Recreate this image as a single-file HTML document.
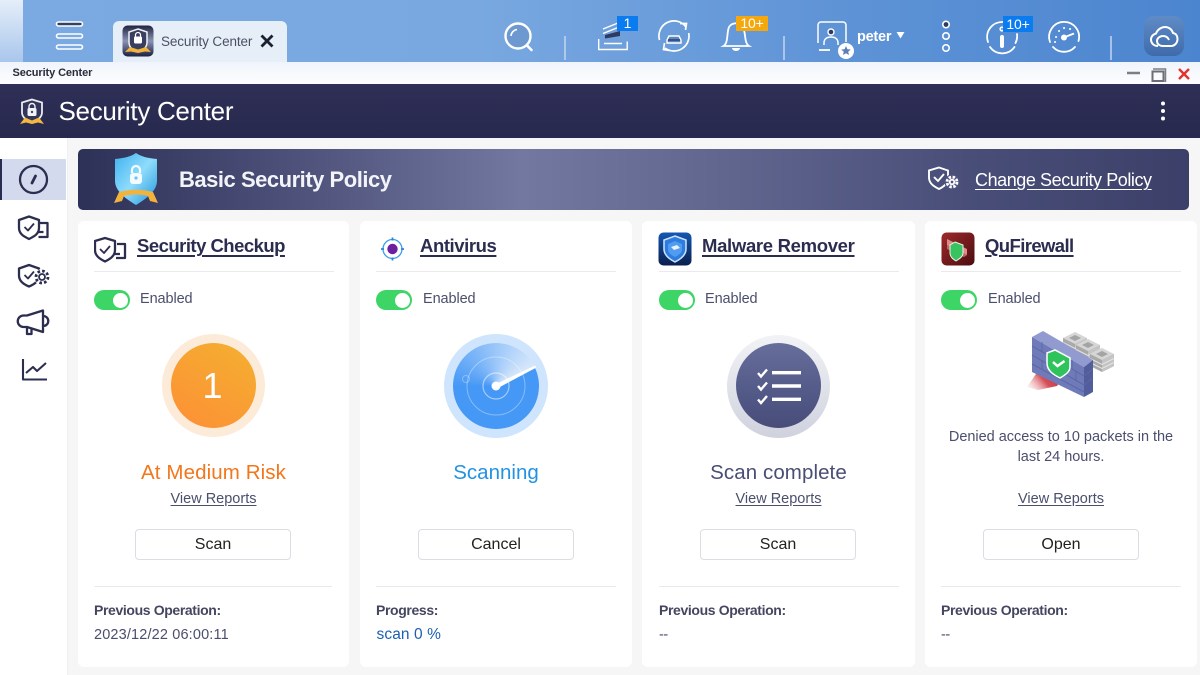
<!DOCTYPE html>
<html><head><meta charset="utf-8"><style>
html,body{margin:0;padding:0}
body{width:1200px;height:675px;overflow:hidden;position:relative;background:#f6f6f7;font-family:"Liberation Sans",sans-serif;color:#44486a}
.a,.t,svg{position:absolute}
.t{white-space:nowrap;line-height:1}
.c{transform:translateX(-50%);text-align:center}
.card{position:absolute;top:221px;height:446px;background:#fff;border-radius:6px}
.ttl{font-size:18.5px;font-weight:bold;color:#2b2d4f;text-decoration:underline;text-decoration-thickness:1.5px;text-underline-offset:3px;top:237px}
.hr{position:absolute;height:1px;background:#e9e9ee}
.tog{position:absolute;top:290px;width:36px;height:20px;border-radius:10px;background:#3dd565}
.tog:after{content:"";position:absolute;right:2.5px;top:2.5px;width:15px;height:15px;background:#fff;border-radius:50%}
.en{font-size:14.5px;top:292px;color:#4b4e6d;letter-spacing:-.1px}
.vr{font-size:14.5px;top:492px;text-decoration:underline;text-underline-offset:2px;color:#4b4e6d}
.btn{position:absolute;top:529px;width:154px;height:29px;border:1px solid #dcdde2;border-radius:4px;background:#fff;color:#222;font-size:16px;text-align:center;line-height:30px}
.po{font-size:14px;font-weight:bold;top:603px;color:#44465f;letter-spacing:-.37px}
.v{font-size:14.5px;top:628px;color:#4b4e6d}
.st{font-size:20.5px;top:463px}
</style></head><body>

<!-- top bar -->
<div class="a" style="left:0;top:0;width:1200px;height:62px;background:linear-gradient(90deg,#7ba9e1 0%,#79a8e0 40%,#5e93d6 70%,#4c85cf 100%)"></div>
<div class="a" style="left:0;top:0;width:23px;height:62px;background:linear-gradient(180deg,#e5eef9,#a9c6ec)"></div>
<svg style="left:0;top:0" width="1200" height="62" fill="none" stroke="#fff" stroke-width="1.6">
 <rect x="56.500" y="22" width="26" height="4" rx="2" fill="#344066" stroke="#fff"/>
 <rect x="56.500" y="34" width="26" height="4" rx="2"/>
 <rect x="56.500" y="45" width="26" height="4" rx="2"/>
 <!-- search -->
 <circle cx="518" cy="36" r="12.500" stroke-width="2.400" fill="#6d98d0"/><path d="M527 45.500l4.500 4.500" stroke-width="2.600" stroke-linecap="round"/><path d="M511 36a7 7 0 0 1 6-6.500" stroke-width="1.600"/>
 <path d="M565 36v24M784 36v24M1111 36v24" stroke="#c4d6ee" stroke-width="1.500"/>
 <!-- tasks -->
 <path d="M603 29l15-6M603 33.500l15-6" stroke-width="1.400"/><path d="M605 35l15-4v5l-15 2.500z" fill="#2f3a62" stroke="none"/><path d="M598.700 39v10.500h28.500v-8M604 43.500h18" stroke-width="1.400"/>
 <!-- sync -->
 <path d="M659.500 40A15 15 0 0 1 686 27M680 23.500h6.500l-1 6.500M688.700 33A15 15 0 0 1 665 48M664.500 43l-1 6.500 6.500 1" stroke-width="1.700"/><path d="M669 36h10l2 4v3h-14v-3z" stroke-width="1.400" fill="#5b86c2"/><path d="M668 40h12" stroke="#2f3a62" stroke-width="1.400"/>
 <!-- bell -->
 <path d="M723.500 46c5-3 3-13 5.500-19 3-5 12-5 14 0 3 6 1 16 6 19z" stroke-width="1.800"/><path d="M732 48a4 3 0 0 0 8 0" fill="#fff" stroke="none"/>
 <!-- user -->
 <path d="M818 43V25a3 3 0 0 1 3-3h22a3 3 0 0 1 3 3v17" stroke-width="1.500"/><circle cx="831" cy="32" r="3" stroke="#fff" fill="#2f3a62" stroke-width="1.400"/><path d="M824 45v-2c0-4 3-6 7-6s7 2 7 6v2" stroke-width="1.500"/><path d="M819 50h11" stroke-width="1.800"/>
 <circle cx="846" cy="51" r="8" fill="#fff" stroke="none"/><path d="M846 46l1.400 3.200 3.400.3-2.600 2.200.8 3.300-3-1.700-3 1.700.8-3.300-2.600-2.200 3.400-.3z" fill="#5c7fb5" stroke="none"/>
 <!-- caret -->
 <path d="M896.500 32h8l-4 6.500z" fill="#fff" stroke="none"/>
 <!-- dots -->
 <circle cx="946" cy="24.500" r="3.200" fill="#2f3a62"/><circle cx="946" cy="36" r="3.200"/><circle cx="946" cy="48" r="3.200"/>
 <!-- info -->
 <path d="M990 47A15 15 0 0 0 1014.500 47M988 42A15 15 0 0 1 1003 22M1017 34a15 15 0 0 1-1.500 9" stroke-width="1.800" stroke-linecap="round"/><path d="M1002 37v9" stroke-width="4" stroke-linecap="round"/><circle cx="1002" cy="29" r="1.800"/>
 <!-- gauge -->
 <path d="M1050 42A15 15 0 1 1 1078.500 41M1053 47A15 15 0 0 0 1075 47" stroke-width="1.800" stroke-linecap="round"/><circle cx="1064" cy="37.500" r="3" fill="#fff" stroke="none"/><path d="M1065 37l9-3.500" stroke-width="2"/><path d="M1056 37h.1M1059 31h.1M1064 28h.1M1070 29h.1M1055 42h.1" stroke-width="2" stroke-linecap="round"/>
</svg>
<div class="a" style="left:1144px;top:16px;width:40px;height:40px;border-radius:10px;background:linear-gradient(180deg,#5f8cc6,#3f6bab)"></div>
<svg style="left:1144px;top:16px" width="40" height="40" fill="none" stroke="#fff" stroke-width="2"><path d="M14 30C9 30 7 26.500 7 23.500c0-3 2.500-5.500 5-6C13.500 13.500 17.500 11 21 11c4 0 7 2.500 8 6 3 .5 4.500 3 4.500 6 0 4-3 7-6.500 7H19c-4 0-6-2.500-6-5s2.500-5 6-5c3 0 5 1.500 6 4"/></svg>
<div class="a t" style="left:617px;top:16px;width:21px;height:15px;background:#0a7cf0;color:#fff;font-size:14px;line-height:15px;text-align:center">1</div>
<div class="a t" style="left:736px;top:16px;width:32px;height:15px;background:#f5a80e;color:#fff;font-size:14px;line-height:15px;text-align:center;letter-spacing:-.2px">10+</div>
<div class="a t" style="left:1003px;top:16px;width:30px;height:16px;background:#0a7cf0;color:#fff;font-size:14px;line-height:16px;text-align:center;letter-spacing:-.2px">10+</div>
<div class="t" style="left:857px;top:29.500px;font-size:14.5px;font-weight:bold;color:#fff;letter-spacing:-.25px">peter</div>

<!-- tab -->
<div class="a" style="left:113px;top:21px;width:174px;height:41px;background:#e6eef7;border-radius:6px 6px 0 0"></div>
<svg style="left:122px;top:25px" width="32" height="32" viewBox="0 0 32 32">
 <defs><linearGradient id="g1" x1="0" y1="0" x2="0" y2="1"><stop offset="0" stop-color="#20233f"/><stop offset=".5" stop-color="#8a93b4"/><stop offset="1" stop-color="#1d2040"/></linearGradient></defs>
 <rect x=".500" y=".500" width="31" height="31" rx="5" fill="url(#g1)"/>
 <path d="M16 4l9 3v10c0 6-4 8-9 10-5-2-9-4-9-10V7z" fill="#3a3f60" stroke="#f1f2f7" stroke-width="1.500"/>
 <rect x="12" y="11.500" width="8" height="7" rx="1.200" fill="#fff"/><path d="M13.500 11.500V10a2.500 2.500 0 0 1 5 0v1.500" stroke="#fff" fill="none" stroke-width="1.200"/>
 <path d="M3 27l5-5 8 2.500 8-2.500 5 5-6-.5-7 1.500-7-1.500z" fill="#f2b33d"/>
</svg>
<div class="t" style="left:161px;top:34.500px;font-size:13.5px;color:#4c5065;letter-spacing:-.12px">Security Center</div>
<svg style="left:260px;top:34px" width="14" height="14" stroke="#1d2030" stroke-width="2.800"><path d="M1.500 1.500l11 11M12.500 1.500l-11 11"/></svg>

<!-- window title -->
<div class="a" style="left:0;top:62px;width:1200px;height:22px;background:linear-gradient(180deg,#f0f4fb,#fdfdfe)"></div>
<div class="t" style="left:12.500px;top:68px;font-size:11px;font-weight:bold;color:#2a2c3a;letter-spacing:-.1px">Security Center</div>
<svg style="left:1120px;top:62px" width="80" height="22">
 <path d="M7 11h13" stroke="#7d7d85" stroke-width="2.500"/>
 <path d="M33 7h12.500v13" fill="none" stroke="#7d7d85" stroke-width="1.500"/><rect x="32.500" y="9.500" width="11" height="9.500" fill="none" stroke="#6d6d75" stroke-width="2"/>
 <path d="M59 7l10 10M69 7L59 17" stroke="#e2332e" stroke-width="2.400"/>
</svg>

<!-- app header -->
<div class="a" style="left:0;top:84px;width:1200px;height:54px;background:linear-gradient(180deg,#2f2f57,#27294d)"></div>
<svg style="left:18px;top:97px" width="28" height="30" viewBox="0 0 28 30">
 <path d="M14 2.500l10 3v10c0 5-5 8-10 10.500C9 23.500 4 20.500 4 15.500v-10z" fill="#33365a" stroke="#e9ebf2" stroke-width="1.800"/>
 <rect x="9.500" y="11" width="9" height="8" rx="1.500" fill="#f2f3f7"/><path d="M11 11V9.500a3 3 0 0 1 6 0V11" fill="none" stroke="#f2f3f7" stroke-width="1.400"/><circle cx="14" cy="15" r="1.200" fill="#44486a"/>
 <path d="M2 27l5-6.500 7 3 7-3 5 6.500-6-1.500-6 1.500-6-1.500z" fill="#f3b842"/>
</svg>
<div class="t" style="left:58.500px;top:98px;font-size:26px;color:#fff;letter-spacing:-.3px">Security Center</div>
<svg style="left:1158px;top:100px" width="10" height="22" fill="#fff"><circle cx="5" cy="3.500" r="2"/><circle cx="5" cy="11" r="2"/><circle cx="5" cy="18.500" r="2"/></svg>

<!-- sidebar -->
<div class="a" style="left:0;top:138px;width:67px;height:537px;background:#fff;border-right:1px solid #efeff2"></div>
<div class="a" style="left:0;top:159px;width:66px;height:41px;background:#d4daed"></div>
<div class="a" style="left:0;top:159px;width:2px;height:41px;background:#2b2d50"></div>
<svg style="left:0;top:138px" width="66" height="250" fill="none" stroke="#2c2e50" stroke-width="2.300" stroke-linejoin="round">
 <circle cx="33.500" cy="41.500" r="13.500"/><path d="M32 45l3.500-7" stroke-width="2.800" stroke-linecap="round"/>
 <path d="M29 78.500l10 3.500v8c0 6-5 8.500-10 11-5-2.500-10-5-10-11v-8z"/><path d="M24.500 89l3.500 3.500 6-7" stroke-width="1.800"/><path d="M40 85h7.500v14h-9M38.500 94h5"/>
 <path d="M29 127l10 3.500v7c0 6-5 9-10 11-5-2-10-5-10-11v-7z"/><path d="M24.500 137l3.500 3.500 6-7" stroke-width="1.800"/>
 <circle cx="42" cy="139" r="8" fill="#fff" stroke="none"/><circle cx="42" cy="139" r="3" stroke-width="1.800"/><circle cx="42" cy="139" r="6" stroke-width="2.800" stroke-dasharray="2.600 2.100"/>
 <path d="M27 177.500L43 172.500v21.500L27 189h-3.500a5.700 5.700 0 0 1 0-11.500zM43 178c7 0 7 10 0 10M27 189v7h4.500v-6"/>
 <path d="M23 221v20.500h24M26 235l7-6 4 4 9-8" stroke-width="2.100"/>
</svg>

<!-- banner -->
<div class="a" style="left:78px;top:149px;width:1111px;height:61px;border-radius:5px;background:linear-gradient(90deg,#2d3157 0%,#52567f 22%,#7278a0 40%,#5f648d 60%,#494e78 80%,#3c4069 100%)"></div>
<svg style="left:112px;top:150px" width="48" height="56" viewBox="0 0 48 56">
 <defs><linearGradient id="g2" x1="0" y1="0" x2="1" y2="1"><stop offset="0" stop-color="#3fb1f0"/><stop offset=".5" stop-color="#8fdcfb"/><stop offset="1" stop-color="#1f94dc"/></linearGradient></defs>
 <path d="M24 3c5 3.500 11 5 21 6v22c0 10-11 18-21 24C14 49 3 41 3 31V9c10-1 16-2.500 21-6z" fill="url(#g2)"/>
 <rect x="18" y="23" width="12" height="11" rx="3" fill="#f3fbff"/><path d="M20 23v-3a4 4 0 0 1 8 0v3" fill="none" stroke="#f3fbff" stroke-width="2.200"/><circle cx="24" cy="28" r="1.600" fill="#6cc3ee"/>
 <path d="M7 42C18 39 30 39 41 42L46 53L38 51L36 46C28 44 20 44 12 46L10 51L2 53z" fill="#f1b33c"/>
</svg>
<div class="t" style="left:179px;top:169px;font-size:22px;font-weight:bold;color:#f3f4f8;letter-spacing:-.48px">Basic Security Policy</div>
<svg style="left:926px;top:165px" width="34" height="30" fill="none" stroke="#fff" stroke-width="1.900">
 <path d="M13 2.500l9 3v7c0 6-4 9-9 11.500-5-2.500-10-5.500-10-11.500v-7z"/><path d="M8 12l4 4 6-7"/>
 <circle cx="26" cy="17" r="7.500" fill="#4f5480" stroke="none"/><circle cx="26" cy="17" r="2.300"/><circle cx="26" cy="17" r="5" stroke-width="2.800" stroke-dasharray="2.500 1.500"/>
</svg>
<div class="t" style="left:975px;top:171px;font-size:18px;color:#fff;text-decoration:underline;text-underline-offset:3px;letter-spacing:-.43px">Change Security Policy</div>

<!-- cards -->
<div class="card" style="left:78px;width:271px"></div>
<div class="card" style="left:360px;width:272px"></div>
<div class="card" style="left:642px;width:273px"></div>
<div class="card" style="left:925px;width:272px"></div>

<!-- card 1 -->
<svg style="left:94px;top:236px" width="34" height="28" fill="none" stroke="#2c2e50" stroke-width="2.300" stroke-linejoin="round">
 <path d="M11 2l10 3v9c0 6-5 9-10 11.500C6 23 1 20 1 14V5z"/><path d="M6 13l4 4 6-7" stroke-width="1.800"/><path d="M23 8h8v14h-9M20 18h6"/>
</svg>
<div class="t ttl" style="left:137px;letter-spacing:-.52px">Security Checkup</div>
<div class="hr" style="left:94px;top:271px;width:240px"></div>
<div class="tog" style="left:94px"></div><div class="t en" style="left:140px">Enabled</div>
<div class="a" style="left:162px;top:334px;width:103px;height:103px;border-radius:50%;background:#fdebd9"></div>
<div class="a" style="left:171px;top:343px;width:85px;height:85px;border-radius:50%;background:linear-gradient(30deg,#fd8f36,#f4b030)"></div>
<div class="t c" style="left:212.500px;top:368px;font-size:36px;color:#fff">1</div>
<div class="t c st" style="left:213.500px;color:#f3761b;letter-spacing:.1px">At Medium Risk</div>
<div class="t c vr" style="left:213.500px">View Reports</div>
<div class="btn" style="left:135px">Scan</div>
<div class="hr" style="left:94px;top:586px;width:238px"></div>
<div class="t po" style="left:94px">Previous Operation:</div>
<div class="t v" style="left:94px;letter-spacing:.15px">2023/12/22 06:00:11</div>

<!-- card 2 -->
<svg style="left:380px;top:236px" width="26" height="26" fill="none">
 <circle cx="12.500" cy="13" r="9.500" stroke="#3f9bea" stroke-width="1.300"/>
 <path d="M12.500 1.500v3M12.500 21.500v3M1 13h3M21 13h3" stroke="#2b84dc" stroke-width="1.800"/>
 <circle cx="12.500" cy="13" r="5.200" fill="#6c1f9e"/>
</svg>
<div class="t ttl" style="left:420px;letter-spacing:-.42px">Antivirus</div>
<div class="hr" style="left:376px;top:271px;width:240px"></div>
<div class="tog" style="left:376px"></div><div class="t en" style="left:423px">Enabled</div>
<div class="a" style="left:444px;top:334px;width:104px;height:104px;border-radius:50%;background:#cfe4fd"></div>
<div class="a" style="left:453px;top:343px;width:86px;height:86px;border-radius:50%;background:conic-gradient(from 64deg,#4598f6 0deg,#4598f6 205deg,#d9e8fb 360deg)"></div>
<svg style="left:444px;top:334px" width="104" height="104" viewBox="0 0 104 104" fill="none">
 <circle cx="52" cy="52" r="29" stroke="#fff" stroke-opacity=".35"/>
 <circle cx="52" cy="52" r="13" stroke="#fff" stroke-opacity=".5" stroke-width="1.200"/>
 <circle cx="22" cy="45" r="3.500" stroke="#fff" stroke-opacity=".3"/>
 <path d="M52 50.500L91 32l.5 1.500L53 54z" fill="#fff" stroke="#fff" stroke-width=".8"/>
 <circle cx="52" cy="52" r="4.500" fill="#fff"/>
</svg>
<div class="t c st" style="left:496px;color:#2392e3">Scanning</div>
<div class="btn" style="left:418px">Cancel</div>
<div class="hr" style="left:376px;top:586px;width:240px"></div>
<div class="t po" style="left:376px">Progress:</div>
<div class="t v" style="left:376.500px;top:627px;font-size:15.5px;color:#1d5fb0;letter-spacing:.1px">scan 0 %</div>

<!-- card 3 -->
<svg style="left:658px;top:232px" width="34" height="34" viewBox="0 0 34 34">
 <defs><linearGradient id="g4" x1="0" y1="0" x2="0" y2="1"><stop offset="0" stop-color="#1557b4"/><stop offset="1" stop-color="#0b1f4e"/></linearGradient></defs>
 <rect x=".500" y=".500" width="33" height="33" rx="5" fill="url(#g4)"/>
 <path d="M17 4l11 4v9c0 6-5 10-11 13C11 27 6 23 6 17V8z" fill="#2e7ce0" stroke="#cfe4fa" stroke-width="1.500"/>
 <path d="M17 9l7 3v5c0 4-3 6-7 8-4-2-7-4-7-8v-5z" fill="#4f9cf0"/><path d="M13 15l6-2 3 3-6 2z" fill="#eaf3fd"/>
</svg>
<div class="t ttl" style="left:702px;letter-spacing:-.32px">Malware Remover</div>
<div class="hr" style="left:659px;top:271px;width:240px"></div>
<div class="tog" style="left:659px"></div><div class="t en" style="left:705px">Enabled</div>
<div class="a" style="left:727px;top:335px;width:103px;height:103px;border-radius:50%;background:linear-gradient(180deg,#f2f3f6,#cfd2de)"></div>
<div class="a" style="left:736px;top:343px;width:85px;height:85px;border-radius:50%;background:linear-gradient(180deg,#666e9b,#474c79)"></div>
<svg style="left:736px;top:343px" width="85" height="85" fill="none" stroke="#fff">
 <path d="M22 30l3 3.500 6-7M22 43l3 3.500 6-7M22 56.500l3 3.500 6-7" stroke-width="2.400"/>
 <path d="M36 29.700h29M36 43h29M36 56.300h29" stroke-width="3.400"/>
</svg>
<div class="t c st" style="left:778.500px;color:#494e74;letter-spacing:.08px">Scan complete</div>
<div class="t c vr" style="left:778.500px">View Reports</div>
<div class="btn" style="left:700px">Scan</div>
<div class="hr" style="left:659px;top:586px;width:240px"></div>
<div class="t po" style="left:659px">Previous Operation:</div>
<div class="t v" style="left:659px;letter-spacing:-.4px">--</div>

<!-- card 4 -->
<svg style="left:941px;top:232px" width="34" height="34" viewBox="0 0 34 34">
 <defs><linearGradient id="g5" x1="0" y1="0" x2="1" y2="1"><stop offset="0" stop-color="#9e2a2a"/><stop offset="1" stop-color="#4a0d10"/></linearGradient></defs>
 <rect x=".500" y=".500" width="33" height="33" rx="5" fill="url(#g5)"/>
 <path d="M6 7l20 10v6L6 13z" fill="#e08a8a"/><path d="M6 13l20 10-3 2L6 17z" fill="#c06565"/>
 <path d="M14 10l8 3v8c0 4-4 6-7 8-3-2-6-4-6-8v-8z" fill="#39c360" stroke="#e8f5e8"/>
</svg>
<div class="t ttl" style="left:985px;letter-spacing:-.6px">QuFirewall</div>
<div class="hr" style="left:941px;top:271px;width:240px"></div>
<div class="tog" style="left:941px"></div><div class="t en" style="left:988px">Enabled</div>
<svg style="left:1022px;top:325px" width="96" height="76" viewBox="0 0 96 76">
 <defs>
  <linearGradient id="g6" x1="1" y1=".3" x2="0" y2=".8"><stop offset="0" stop-color="#c8343c"/><stop offset=".45" stop-color="#d64f57"/><stop offset="1" stop-color="#f3c9cc" stop-opacity=".25"/></linearGradient>
  <g id="srv"><path d="M-12 5v12l12 6 12-6V5z" fill="#a9a9a9"/><path d="M0 11v12l12-6V5z" fill="#c4c4c4"/><path d="M-12 9.500l12 6 12-6M-12 13.500l12 6 12-6" fill="none" stroke="#e4e4e4"/><path d="M0-1L12 5 0 11-12 5z" fill="#d6d6d6"/><path d="M0 2L6 5 0 8-6 5z" fill="#a4a4a4"/></g>
 </defs>
 <use href="#srv" x="53" y="8"/><use href="#srv" x="66" y="15"/><use href="#srv" x="80" y="24"/>
 <path d="M5 62L16 46L37 58L35 61L16 65z" fill="url(#g6)"/>
 <path d="M10 12L21 6L71 35L62 42z" fill="#919bd0"/>
 <path d="M10 12L62 42V72L10 47z" fill="#6f7bb8"/>
 <path d="M62 42L71 35V67L62 72z" fill="#525d9b"/>
 <path d="M10 21L62 51M10 30L62 60M10 39L62 67M62 51l9-7M62 60l9-7" stroke="#5b66a6" stroke-width="1" fill="none"/>
 <path d="M20 17v9M30 32v9M50 35v9M20 35v9M54 47v9" stroke="#5b66a6" stroke-width=".8" fill="none"/>
 <path d="M25 28L33 25L48 33V42C48 47 43 50 38 53C32 50 25 46 25 38z" fill="#2fc35b" stroke="#fff" stroke-width="1.500"/>
 <path d="M31 37l4.500 4 7-5" fill="none" stroke="#fff" stroke-width="2.500"/>
</svg>
<div class="t c" style="left:1061px;top:427px;font-size:14.500px;color:#4b4e6d;line-height:20px;letter-spacing:-.02px">Denied access to 10 packets in the<br>last 24 hours.</div>
<div class="t c vr" style="left:1061px">View Reports</div>
<div class="btn" style="left:983px">Open</div>
<div class="hr" style="left:941px;top:586px;width:240px"></div>
<div class="t po" style="left:941px">Previous Operation:</div>
<div class="t v" style="left:941px;letter-spacing:-.4px">--</div>

</body></html>
